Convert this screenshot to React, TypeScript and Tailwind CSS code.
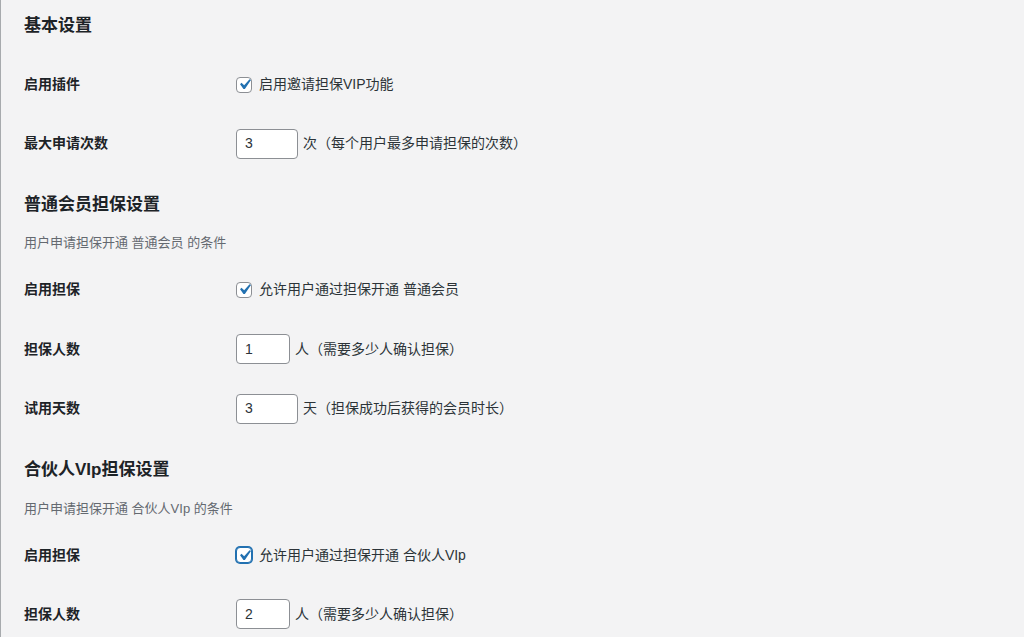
import type { ReactNode } from "react";

const font = { fontFamily: '"Liberation Sans", "Noto Sans CJK SC", sans-serif' };

function CheckIcon() {
  return (
    <svg viewBox="0 0 20 20" className="w-[21px] h-[21px] -m-[3px] shrink-0">
      <path d="M14.83 4.89l1.34.94-5.81 8.38H9.02L5.78 9.67l1.34-1.25 2.57 2.4z" fill="#2271b1" />
    </svg>
  );
}

function Checkbox({ focused }: { focused?: boolean }) {
  return (
    <span
      className={
        focused
          ? "w-4 h-4 rounded-[4px] bg-white border border-[#2271b1] shadow-[0_0_0_1px_#2271b1] flex items-center justify-center shrink-0"
          : "w-4 h-4 rounded-[4px] bg-white border border-[#8c8f94] flex items-center justify-center shrink-0"
      }
    >
      <CheckIcon />
    </span>
  );
}

function NumberBox({ value, wide }: { value: string; wide?: boolean }) {
  return (
    <span
      className={
        (wide ? "w-[62px]" : "w-[54px]") +
        " h-[30px] rounded-[4px] bg-white border border-[#8c8f94] flex items-center pl-[8px] text-[14px] text-[#2c3338]"
      }
    >
      {value}
    </span>
  );
}

function Row({ label, tall, children }: { label: string; tall?: boolean; children: ReactNode }) {
  return (
    <div className={(tall ? "h-[59.5px]" : "h-[59px]") + " flex items-center"}>
      <div className="w-[212px] text-[14px] font-bold text-[#1d2327]">{label}</div>
      <div className="flex items-center text-[14px] text-[#2c3338]">{children}</div>
    </div>
  );
}

function CheckRow({ label, text, focused, tall }: { label: string; text: string; focused?: boolean; tall?: boolean }) {
  return (
    <Row label={label} tall={tall}>
      <Checkbox focused={focused} />
      <span className="ml-[7px]">{text}</span>
    </Row>
  );
}

function InputRow({ label, value, unit, wide, tall }: { label: string; value: string; unit: string; wide?: boolean; tall?: boolean }) {
  return (
    <Row label={label} tall={tall}>
      <NumberBox value={value} wide={wide} />
      <span className="ml-[5px]">{unit}</span>
    </Row>
  );
}

export default function App() {
  return (
    <div className="h-[637px] overflow-hidden bg-[#f3f3f4] border-l border-[#a7aaad]" style={font}>
      <div className="pl-[23px]">
        <h2 className="pt-[14px] h-[55px] leading-[24px] text-[17px] font-bold text-[#1d2327]">基本设置</h2>
        <CheckRow label="启用插件" text="启用邀请担保VIP功能" />
        <InputRow label="最大申请次数" value="3" unit="次（每个用户最多申请担保的次数）" wide />

        <h2 className="pt-[20px] leading-[24px] text-[17px] font-bold text-[#1d2327]">普通会员担保设置</h2>
        <p className="mt-[16px] mb-[7px] leading-[20px] text-[13px] text-[#646970]">用户申请担保开通 普通会员 的条件</p>
        <CheckRow label="启用担保" text="允许用户通过担保开通 普通会员" tall />
        <InputRow label="担保人数" value="1" unit="人（需要多少人确认担保）" tall />
        <InputRow label="试用天数" value="3" unit="天（担保成功后获得的会员时长）" wide tall />

        <h2 className="pt-[19px] leading-[24px] text-[17px] font-bold text-[#1d2327]">合伙人VIp担保设置</h2>
        <p className="mt-[17px] mb-[7px] leading-[20px] text-[13px] text-[#646970]">用户申请担保开通 合伙人VIp 的条件</p>
        <CheckRow label="启用担保" text="允许用户通过担保开通 合伙人VIp" focused />
        <InputRow label="担保人数" value="2" unit="人（需要多少人确认担保）" />
      </div>
    </div>
  );
}
